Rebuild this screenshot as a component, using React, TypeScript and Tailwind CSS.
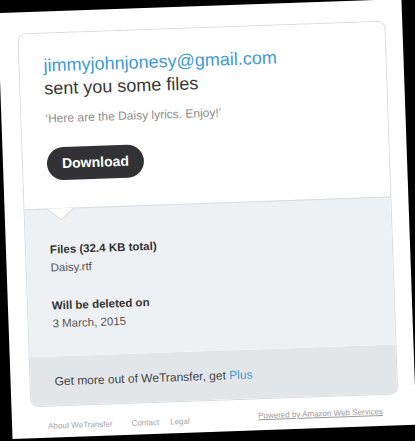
export default function App() {
  return (
    <div className="w-[415px] h-[441px] bg-black overflow-hidden pt-[6px] pl-[5px] font-['Liberation_Sans',Arial,sans-serif]">
      <div className="w-[404px] h-[426px] bg-white -rotate-2 pt-[21px] pl-[19px]">
        <div className="w-[368px] rounded-[8px] border border-[#d9dcdf] overflow-hidden">
          {/* message */}
          <div className="h-[175px] bg-white px-[24px] pt-[21px]">
            <p className="text-[18px] leading-[23px] text-[#3d9ad6]">jimmyjohnjonesy@gmail.com</p>
            <p className="text-[18px] leading-[23px] text-[#383838]">sent you some files</p>
            <p className="mt-[10px] text-[12px] leading-[16px] text-[#8c8c8c]">‘Here are the Daisy lyrics. Enjoy!’</p>
            <button className="mt-[21px] flex h-[33px] w-[97px] items-center justify-center rounded-full bg-[#323234] text-[14px] font-bold text-white">
              Download
            </button>
          </div>

          {/* details */}
          <div className="relative border-t border-[#d9dcdf] bg-[#eef1f4] px-[24px] pt-[31px] pb-[24px] text-[11.5px] leading-[18px]">
            <svg className="absolute left-[23px] top-[-1px]" width="26" height="13" viewBox="0 0 26 13">
              <polygon points="0,0 26,0 13,11.5" fill="#ffffff" />
              <polyline points="0,0.5 13,11.5 26,0.5" fill="none" stroke="#d9dcdf" strokeWidth="1" />
            </svg>
            <p className="font-bold text-[#333]">Files (32.4 KB total)</p>
            <p className="text-[#555]">Daisy.rtf</p>
            <p className="mt-[20px] font-bold text-[#333]">Will be deleted on</p>
            <p className="text-[#555]">3 March, 2015</p>
          </div>

          <div className="flex h-[49px] items-center bg-[#e3e6e9] px-[24px] text-[12px] text-[#444]">
            <span>
              Get more out of WeTransfer, get <span className="text-[#3d9ad6]">Plus</span>
            </span>
          </div>
        </div>

        <div className="mt-[15px] flex w-[368px] items-start pl-[17px] pr-[16px] text-[8px] leading-[10px] text-[#a5a5a5]">
          <span>About WeTransfer</span>
          <span className="ml-[19px]">Contact</span>
          <span className="ml-[11px]">Legal</span>
          <span className="-mt-[3px] ml-auto text-[#9a9a9a] underline">Powered by Amazon Web Services</span>
        </div>
      </div>
    </div>
  );
}
